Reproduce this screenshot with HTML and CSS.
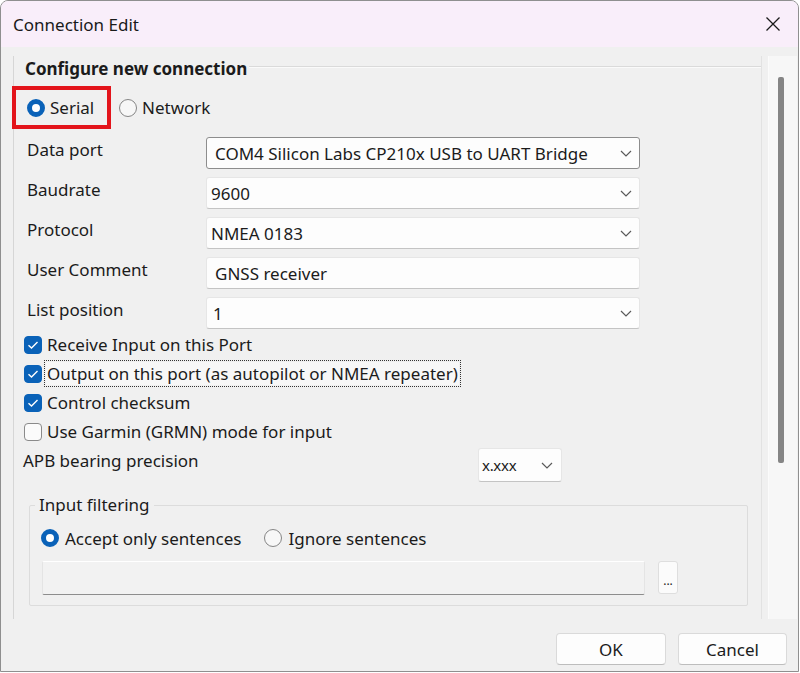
FILE: index.html
```html
<!DOCTYPE html>
<html>
<head>
<meta charset="utf-8">
<link rel="stylesheet" href="styles.css">
</head>
<body>
<div class="window">
  <div class="titlebar">
    <span class="title">Connection Edit</span>
    <span class="close"><svg width="16" height="16" viewBox="0 0 16 16"><path d="M1.5 1.5 L14.5 14.5 M14.5 1.5 L1.5 14.5" stroke="#1a1a1a" stroke-width="1.3" fill="none"/></svg></span>
  </div>
  <div class="client">
    <div class="scrollarea">
      <div class="panel">
        <div class="group-head"><span class="head-text">Configure new connection</span><span class="rule"></span></div>
        <div class="mode-row">
          <label class="radio highlight"><span class="rb on"></span><span>Serial</span></label>
          <label class="radio net"><span class="rb"></span><span>Network</span></label>
        </div>
        <div class="form">
          <div class="row"><span class="lbl">Data port</span><div class="combo focus"><span class="val wide">COM4 Silicon Labs CP210x USB to UART Bridge</span><svg class="chev" width="12" height="7" viewBox="0 0 12 7"><path d="M1 1 L6 6 L11 1" stroke="#5a5a5a" stroke-width="1.2" fill="none"/></svg></div></div>
          <div class="row"><span class="lbl">Baudrate</span><div class="combo"><span class="val">9600</span><svg class="chev" width="12" height="7" viewBox="0 0 12 7"><path d="M1 1 L6 6 L11 1" stroke="#5a5a5a" stroke-width="1.2" fill="none"/></svg></div></div>
          <div class="row"><span class="lbl">Protocol</span><div class="combo"><span class="val">NMEA 0183</span><svg class="chev" width="12" height="7" viewBox="0 0 12 7"><path d="M1 1 L6 6 L11 1" stroke="#5a5a5a" stroke-width="1.2" fill="none"/></svg></div></div>
          <div class="row"><span class="lbl">User Comment</span><div class="combo textbox"><span class="val wide">GNSS receiver</span></div></div>
          <div class="row"><span class="lbl">List position</span><div class="combo"><span class="val mid">1</span><svg class="chev" width="12" height="7" viewBox="0 0 12 7"><path d="M1 1 L6 6 L11 1" stroke="#5a5a5a" stroke-width="1.2" fill="none"/></svg></div></div>
        </div>
        <div class="checks">
          <label class="check"><span class="cb on"><svg width="12" height="10" viewBox="0 0 12 10"><path d="M1.5 5.2 L4.5 8 L10.5 2" stroke="#fff" stroke-width="1.4" fill="none"/></svg></span><span>Receive Input on this Port</span></label>
          <label class="check"><span class="cb on"><svg width="12" height="10" viewBox="0 0 12 10"><path d="M1.5 5.2 L4.5 8 L10.5 2" stroke="#fff" stroke-width="1.4" fill="none"/></svg></span><span class="focusrect">Output on this port (as autopilot or NMEA repeater)</span></label>
          <label class="check"><span class="cb on"><svg width="12" height="10" viewBox="0 0 12 10"><path d="M1.5 5.2 L4.5 8 L10.5 2" stroke="#fff" stroke-width="1.4" fill="none"/></svg></span><span>Control checksum</span></label>
          <label class="check"><span class="cb"></span><span>Use Garmin (GRMN) mode for input</span></label>
        </div>
        <div class="apb">
          <span class="apb-lbl">APB bearing precision</span>
          <div class="combo small"><span class="val tiny">x.xxx</span><svg class="chev" width="12" height="7" viewBox="0 0 12 7"><path d="M1 1 L6 6 L11 1" stroke="#5a5a5a" stroke-width="1.2" fill="none"/></svg></div>
        </div>
        <fieldset class="filter">
          <legend>Input filtering</legend>
          <div class="filter-radios">
            <label class="radio"><span class="rb on"></span><span>Accept only sentences</span></label>
            <label class="radio"><span class="rb"></span><span>Ignore sentences</span></label>
          </div>
          <div class="filter-field">
            <div class="sentences"></div>
            <div class="dots">...</div>
          </div>
        </fieldset>
      </div>
      <div class="vscroll"><div class="thumb"></div></div>
    </div>
    <div class="buttons">
      <div class="btn">OK</div>
      <div class="btn">Cancel</div>
    </div>
  </div>
</div>
</body>
</html>
```
FILE: styles.css
```css
* { box-sizing: border-box; }
html, body { margin: 0; padding: 0; }
body {
  width: 800px;
  height: 673px;
  overflow: hidden;
  background: #ffffff;
  font-family: "Noto Sans", "Open Sans", sans-serif;
  font-size: 17px;
  color: #1b1b1b;
}
.window {
  width: 799px;
  height: 672px;
  border: 1px solid #8f8f8f;
  border-radius: 8px 8px 0 0;
  overflow: hidden;
  display: flex;
  flex-direction: column;
  background: #f0f0f0;
}
.titlebar {
  height: 46px;
  flex: none;
  background: #f9eefa;
  display: flex;
  align-items: center;
  justify-content: space-between;
  padding-left: 12px;
  padding-right: 17px;
}
.title { font-size: 17px; color: #1a1a1a; }
.close { display: flex; width: 16px; height: 16px; }
.client {
  flex: 1;
  display: flex;
  flex-direction: column;
  background: #f0f0f0;
}
.scrollarea {
  margin-top: 9px;
  margin-left: 12px;
  height: 563px;
  display: flex;
}
.panel {
  width: 749px;
  height: 563px;
  border-left: 1px solid #d6d6d6;
  border-right: 1px solid #e2e2e2;
  display: flex;
  flex-direction: column;
}
.group-head {
  height: 24px;
  display: flex;
  align-items: center;
  padding-left: 11px;
}
.head-text { font-weight: 700; font-size: 17px; }
.rule {
  flex: 1;
  height: 2px;
  margin-left: 2px;
  margin-top: -2px;
  border-top: 1px solid #dadada;
  border-bottom: 1px solid #fafafa;
}
.mode-row {
  margin-top: 6px;
  display: flex;
  align-items: center;
}
.radio { display: flex; align-items: center; }
.rb {
  width: 18px;
  height: 18px;
  border-radius: 50%;
  border: 1px solid #858585;
  background: #f7f7f7;
  flex: none;
  margin-right: 5px;
}
.rb.on {
  border: 5px solid #0a62b8;
  background: #ffffff;
}
.highlight {
  margin-left: -2px;
  height: 43px;
  width: 99px;
  border: 4px solid #e3141b;
  padding-left: 11px;
}
.net { margin-left: 8px; }
.form {
  margin-top: 8px;
  display: flex;
  flex-direction: column;
  gap: 8px;
}
.row { display: flex; height: 32px; }
.lbl {
  width: 192px;
  padding-left: 13px;
  line-height: 26px;
}
.combo {
  width: 434px;
  height: 32px;
  background: #fdfdfd;
  border: 1px solid #e6e6e6;
  border-bottom-color: #c4c4c4;
  border-radius: 3px;
  display: flex;
  align-items: center;
  justify-content: space-between;
  padding-left: 4px;
  padding-right: 7px;
}
.combo.focus { border-color: #8d8d8d; }
.val { padding-left: 0; }
.val.wide { padding-left: 4px; }
.val.mid { padding-left: 2px; }
.chev { flex: none; }
.checks {
  margin-top: 1px;
  display: flex;
  flex-direction: column;
}
.check {
  height: 29px;
  display: flex;
  align-items: center;
  padding-left: 10px;
}
.cb {
  width: 18px;
  height: 18px;
  border-radius: 4px;
  border: 1px solid #8a8a8a;
  background: #fbfbfb;
  margin-right: 5px;
  flex: none;
  display: flex;
  align-items: center;
  justify-content: center;
}
.cb.on {
  background: #0a62b8;
  border-color: #0a62b8;
}
.focusrect {
  outline: 1px dotted #333;
  outline-offset: 1px;
  margin-left: -1px;
  padding: 0 1px;
  background: #f7f7f7;
}
.apb {
  margin-top: 2px;
  height: 34px;
  display: flex;
}
.apb-lbl {
  width: 464px;
  padding-left: 9px;
  line-height: 26px;
}
.combo.small {
  width: 84px;
  height: 34px;
  padding-left: 3px;
  padding-right: 8px;
}
.val.tiny { font-size: 15px; letter-spacing: -0.3px; }
.filter {
  margin: 12px 0 0 15px;
  width: 719px;
  padding: 0 0 10px 0;
  border: 1px solid #dcdcdc;
  border-radius: 2px;
}
.filter legend {
  margin-left: 5px;
  padding: 0 4px;
  line-height: 22px;
}
.filter-radios {
  margin-top: 11px;
  height: 22px;
  display: flex;
  align-items: center;
  padding-left: 11px;
}
.filter-radios .radio + .radio { margin-left: 23px; }
.filter-radios .rb { margin-right: 6px; }
.filter-field {
  margin-top: 12px;
  display: flex;
  align-items: flex-start;
  padding-left: 12px;
}
.sentences {
  width: 603px;
  height: 34px;
  background: #f2f2f2;
  border: 1px solid #e4e4e4;
  border-top-color: #ffffff;
  border-bottom-color: #8d8d8d;
  border-radius: 2px;
}
.dots {
  margin-left: 13px;
  width: 20px;
  height: 33px;
  background: #fbfbfb;
  border: 1px solid #dedede;
  border-radius: 3px;
  font-size: 12px;
  line-height: 12px;
  display: flex;
  align-items: flex-end;
  justify-content: center;
  padding-bottom: 6px;
}
.vscroll {
  width: 29px;
  height: 563px;
  margin-left: 6px;
  background: #f7f7f7;
  border-left: 1px solid #fbfbfb;
  padding-top: 21px;
  padding-left: 9px;
}
.thumb {
  width: 6px;
  height: 386px;
  background: #858585;
  border-radius: 2px;
}
.buttons {
  margin-top: 14px;
  display: flex;
  justify-content: flex-end;
  gap: 12px;
  padding-right: 11px;
}
.btn {
  height: 32px;
  width: 110px;
  background: #fdfdfd;
  border: 1px solid #dadada;
  border-bottom-color: #bdbdbd;
  border-radius: 4px;
  display: flex;
  align-items: center;
  justify-content: center;
  font-size: 17px;
}
.btn + .btn { width: 109px; }
```
